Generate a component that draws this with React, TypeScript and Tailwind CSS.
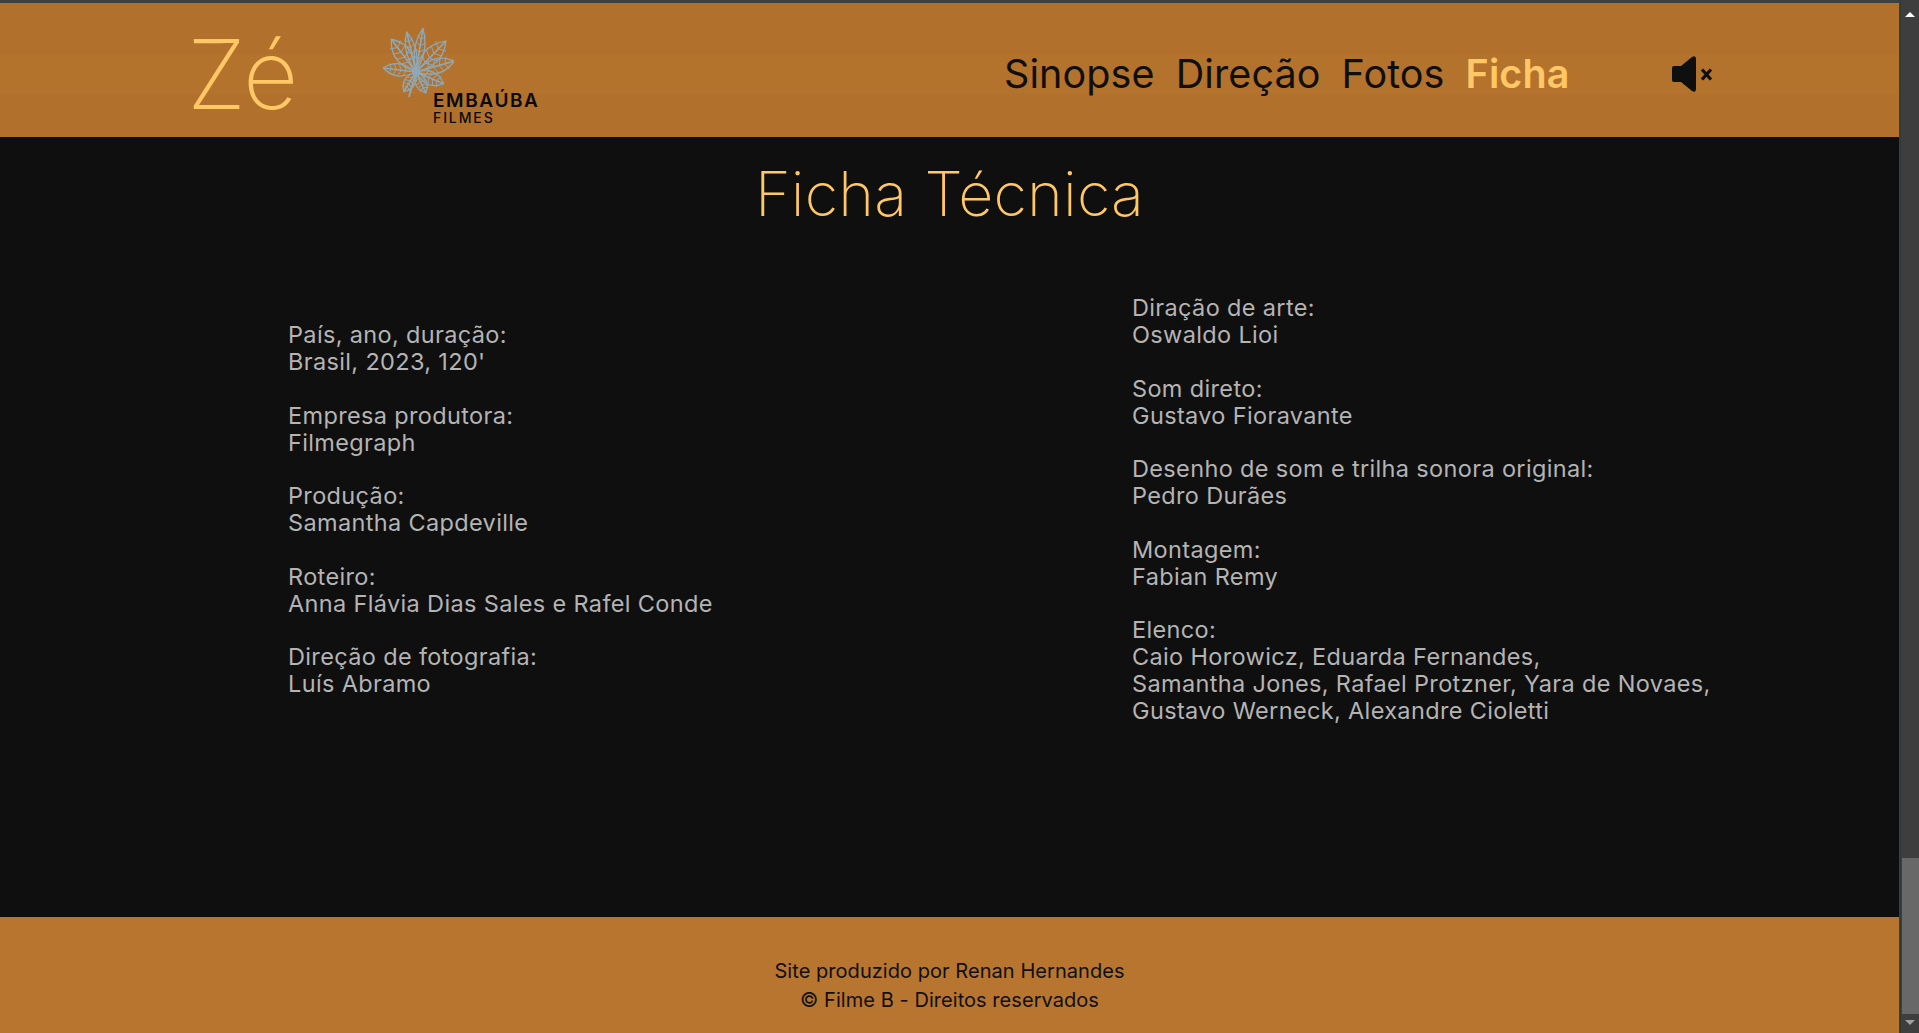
const leaves = [
  { a: -13, l: 41, w: 8 },
  { a: 9, l: 44, w: 8 },
  { a: -37, l: 41, w: 13 },
  { a: 44, l: 43, w: 13 },
  { a: 74, l: 40, w: 12 },
  { a: -83, l: 33, w: 10 },
  { a: 113, l: 30, w: 11 },
  { a: 155, l: 23, w: 9 },
  { a: -148, l: 23, w: 9 },
];

function Flower() {
  return (
    <svg width="76" height="74" viewBox="-38 -44 76 74" fill="none" className="block">
      {leaves.map((leaf, i) => (
        <g key={i} transform={`rotate(${leaf.a})`} stroke="#8fa8b6" strokeWidth="1.300">
          <path
            d={`M0 0C${-leaf.w * 0.6} ${-leaf.l * 0.3} ${-leaf.w} ${-leaf.l * 0.62} 0 ${-leaf.l}C${leaf.w} ${-leaf.l * 0.62} ${leaf.w * 0.6} ${-leaf.l * 0.3} 0 0Z`}
          />
          <path d={`M0 0V${-leaf.l}`} strokeWidth="1.600" />
          {[0.3, 0.45, 0.6, 0.75].map((t) => (
            <path
              key={t}
              strokeWidth="0.900"
              d={`M0 ${-leaf.l * t}L${-leaf.w * 0.55} ${-leaf.l * (t + 0.08)}M0 ${-leaf.l * t}L${leaf.w * 0.55} ${-leaf.l * (t + 0.08)}`}
            />
          ))}
        </g>
      ))}
      <path d="M0 0L-7 25" stroke="#8fa8b6" strokeWidth="1.800" />
      <circle cx="0" cy="0" r="4" fill="#8fa8b6" />
    </svg>
  );
}

function MuteIcon() {
  return (
    <svg width="42" height="36" viewBox="0 0 42 36" className="block">
      <path d="M1 12Q1 10 3 10H10L21 1Q25 -1 25 3V33Q25 37 21 35L10 26H3Q1 26 1 24Z" fill="#0f0f0f" />
      <path d="M31 13.500L40 23.500M40 13.500L31 23.500" stroke="#0f0f0f" strokeWidth="3.200" />
    </svg>
  );
}

const left = [
  ["País, ano, duração:", "Brasil, 2023, 120'"],
  ["Empresa produtora:", "Filmegraph"],
  ["Produção:", "Samantha Capdeville"],
  ["Roteiro:", "Anna Flávia Dias Sales e Rafel Conde"],
  ["Direção de fotografia:", "Luís Abramo"],
];

const right = [
  ["Diração de arte:", "Oswaldo Lioi"],
  ["Som direto:", "Gustavo Fioravante"],
  ["Desenho de som e trilha sonora original:", "Pedro Durães"],
  ["Montagem:", "Fabian Remy"],
  [
    "Elenco:",
    "Caio Horowicz, Eduarda Fernandes,",
    "Samantha Jones, Rafael Protzner, Yara de Novaes,",
    "Gustavo Werneck, Alexandre Cioletti",
  ],
];

function Credits({ groups, className }: { groups: string[][]; className: string }) {
  return (
    <div className={className}>
      {groups.map((g, i) => (
        <div key={i} className="mb-[26.800px] last:mb-0">
          {g.map((line) => (
            <div key={line} className="whitespace-nowrap">
              {line}
            </div>
          ))}
        </div>
      ))}
    </div>
  );
}

export default function App() {
  return (
    <div className="flex h-[1033px] w-full overflow-hidden bg-[#3e3e3e] font-['Inter',sans-serif]">
      <div className="flex w-[1899px] shrink-0 flex-col bg-[#0f0f0f]">
        <div className="h-[3px] bg-[#3c4144]" />
        <header className="flex h-[134px] items-center bg-[linear-gradient(#b1712c_0,#b1712c_38%,#b3732d_38%,#b3732d_68%,#b1712c_68%)] text-[#0f0f0f]">
          <div className="ml-[187px] w-[191px] pt-[8px] text-[96px] leading-none font-extralight tracking-[-3px] text-[#ffc766]">
            Zé
          </div>
          <div className="mt-[13px] w-[236px]">
            <Flower />
            <div className="mt-[-11px] ml-[55px] text-[19px] leading-[20px] font-semibold tracking-[1.600px] text-[#0a0a0a]">EMBAÚBA</div>
            <div className="ml-[55px] mt-[-1px] text-[14px] leading-[15px] font-medium tracking-[1.900px] text-[#0a0a0a]">FILMES</div>
          </div>
          <nav className="ml-[390px] flex items-center gap-[21px] pt-[10px] text-[39.500px] leading-none tracking-[0.1px]">
            <span>Sinopse</span>
            <span>Direção</span>
            <span>Fotos</span>
            <span className="font-semibold text-[#ffc766]">Ficha</span>
          </nav>
          <div className="ml-[101px] pt-[8px]">
            <MuteIcon />
          </div>
        </header>
        <main className="flex flex-1 flex-col text-[#b4b4b4]">
          <h1 className="mt-[21px] text-center text-[61px] leading-[72px] font-extralight tracking-[0.2px] text-[#ffc766]">Ficha Técnica</h1>
          <div className="mt-[65px] flex flex-1 items-start pl-[288px] text-[23.500px] leading-[26.900px] tracking-[0.35px]">
            <Credits groups={left} className="mt-[27px] w-[844px]" />
            <Credits groups={right} className="" />
          </div>
        </main>
        <footer className="flex h-[116px] flex-col items-center bg-[#b7752f] pt-[40px] text-[20px] leading-[29px] tracking-[0.05px] text-[#0f0f0f]">
          <div>Site produzido por Renan Hernandes</div>
          <div>© Filme B - Direitos reservados</div>
        </footer>
      </div>
      <div className="ml-px flex w-[19px] flex-col items-center border-l border-[#2c3a3c] bg-[#3e3e3e]">
        <div className="mt-[12px] h-0 w-0 border-x-[5px] border-b-[5px] border-x-transparent border-b-white" />
        <div className="mt-[841px] h-[156px] w-[17px] bg-[#686868]" />
        <div className="mt-[6px] h-0 w-0 border-x-[5px] border-t-[5px] border-x-transparent border-t-[#a0a0a0]" />
      </div>
    </div>
  );
}
